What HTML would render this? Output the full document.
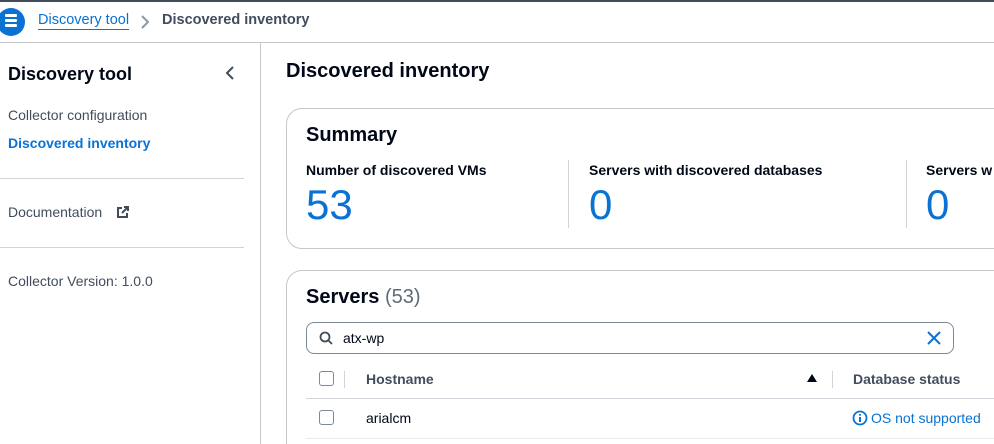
<!DOCTYPE html><html><head><style>
*{box-sizing:border-box;margin:0;padding:0}
html,body{width:994px;height:444px;overflow:hidden}
body{background:#fff;font-family:"Liberation Sans",sans-serif;color:#000716;position:relative;font-size:14px}
.a{position:absolute;white-space:nowrap}
.b{font-weight:bold}
.blue{color:#0972d3}
.hr{position:absolute;background:#d1d5db;height:1px}
.cb{position:absolute;width:15px;height:15px;border:1.5px solid #7d8998;border-radius:3px}
</style></head><body>
<div class="hr" style="left:0;top:0;width:994px;height:2px;background:#414d5c"></div>
<div class="hr" style="left:0;top:42px;width:994px;background:#c6c6cd"></div>
<div class="a" style="left:-3px;top:8px;width:28px;height:28px;border-radius:50%;background:#0972d3"></div>
<div class="a" style="left:5px;top:14px;width:12px;height:2.5px;border-radius:1px;background:#fff;box-shadow:0 5px 0 #fff,0 10px 0 #fff"></div>
<div class="a blue" style="left:38px;top:12px;font-size:14.5px;border-bottom:1px solid #0972d3;line-height:17px">Discovery tool</div>
<svg class="a" style="left:140px;top:15px" width="10" height="14"><path d="M2 1l6 6-6 6" fill="none" stroke="#8d99a8" stroke-width="2"/></svg>
<div class="a b" style="left:162px;top:12px;font-size:14.5px;color:#414d5c">Discovered inventory</div>
<div class="hr" style="left:260px;top:43px;width:1px;height:401px;background:#c6c6cd"></div>
<div class="a b" style="left:8px;top:64px;font-size:18px">Discovery tool</div>
<svg class="a" style="left:224px;top:66px" width="12" height="14"><path d="M9 1L3 7l6 6" fill="none" stroke="#414d5c" stroke-width="2"/></svg>
<div class="a" style="left:8px;top:107px;color:#414d5c">Collector configuration</div>
<div class="a b blue" style="left:8px;top:135px">Discovered inventory</div>
<div class="hr" style="left:0;top:178px;width:244px"></div>
<div class="a" style="left:8px;top:204px;color:#414d5c">Documentation</div>
<svg class="a" style="left:116px;top:206px" width="13" height="13"><path d="M6 2H2v9h9V7M8 1h4v4M12 1L6 7" fill="none" stroke="#414d5c" stroke-width="2"/></svg>
<div class="hr" style="left:0;top:247px;width:244px"></div>
<div class="a" style="left:8px;top:273px;color:#414d5c">Collector Version: 1.0.0</div>
<div class="a b" style="left:286px;top:60px;font-size:20px">Discovered inventory</div>
<div class="a" style="left:286px;top:108px;width:730px;height:141px;border:1px solid #c6c6cd;border-radius:16px"></div>
<div class="a b" style="left:306px;top:124px;font-size:20px">Summary</div>
<div class="a b" style="left:306px;top:162px">Number of discovered VMs</div>
<div class="a b" style="left:589px;top:162px">Servers with discovered databases</div>
<div class="a b" style="left:926px;top:162px">Servers w</div>
<div class="a blue" style="left:306px;top:181px;font-size:42px">53</div>
<div class="a blue" style="left:589px;top:181px;font-size:42px">0</div>
<div class="a blue" style="left:926px;top:181px;font-size:42px">0</div>
<div class="hr" style="left:568px;top:160px;width:1px;height:68px"></div>
<div class="hr" style="left:906px;top:160px;width:1px;height:68px"></div>
<div class="a" style="left:286px;top:270px;width:730px;height:174px;border:1px solid #c6c6cd;border-bottom:none;border-radius:16px 16px 0 0"></div>
<div class="a" style="left:306px;top:286px;font-size:20px"><b>Servers</b> <span style="color:#5f6b7a">(53)</span></div>
<div class="a" style="left:306px;top:322px;width:648px;height:32px;border:1px solid #7d8998;border-radius:8px"></div>
<svg class="a" style="left:319px;top:331px" width="14" height="14"><circle cx="6" cy="6" r="4.5" fill="none" stroke="#414d5c" stroke-width="1.8"/><path d="M9.5 9.5L13 13" stroke="#414d5c" stroke-width="1.8"/></svg>
<div class="a" style="left:343px;top:330px">atx-wp</div>
<svg class="a" style="left:927px;top:331px" width="14" height="14"><path d="M1 1l12 12M13 1L1 13" stroke="#0972d3" stroke-width="2"/></svg>
<div class="cb" style="left:319px;top:371px"></div>
<div class="hr" style="left:344px;top:371px;width:1px;height:17px"></div>
<div class="a b" style="left:366px;top:371px;color:#414d5c">Hostname</div>
<div class="a" style="left:807px;top:374px;border-left:5px solid transparent;border-right:5px solid transparent;border-bottom:8px solid #000716"></div>
<div class="hr" style="left:832px;top:371px;width:1px;height:17px"></div>
<div class="a b" style="left:853px;top:371px;color:#414d5c">Database status</div>
<div class="hr" style="left:306px;top:398px;width:688px"></div>
<div class="cb" style="left:319px;top:410px"></div>
<div class="a" style="left:366px;top:410px">arialcm</div>
<svg class="a" style="left:852px;top:410px" width="16" height="16"><circle cx="8" cy="8" r="6.5" fill="none" stroke="#0972d3" stroke-width="1.8"/><path d="M8 7v5M8 4v1.6" stroke="#0972d3" stroke-width="2"/></svg>
<div class="a blue" style="left:871px;top:410px">OS not supported</div>
<div class="hr" style="left:306px;top:438px;width:688px;background:#e9ebed"></div>
</body></html>
